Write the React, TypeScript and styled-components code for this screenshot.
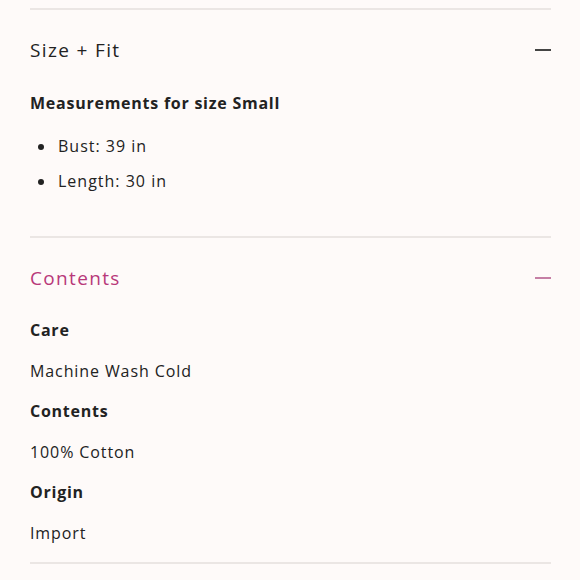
import React from "react";
import styled, { createGlobalStyle } from "styled-components";

const Global = createGlobalStyle`
  html, body { margin: 0; padding: 0; background: #fefaf9; }
  body { font-family: "Open Sans", Lato, sans-serif; color: #222; }
`;

const Page = styled.div`
  padding: 8px 29px 0 30px;
`;

const Section = styled.section<{ $pad: number }>`
  border-top: 2px solid #ebe6e4;
  padding-bottom: ${(p) => p.$pad}px;
`;

const Header = styled.div`
  display: flex;
  align-items: center;
  justify-content: space-between;
  padding: 28px 0;
`;

const Title = styled.h2<{ $active?: boolean }>`
  margin: 0;
  font-size: 19px;
  line-height: 24px;
  font-weight: 400;
  letter-spacing: 1.35px;
  color: ${(p) => (p.$active ? "#b8387a" : "#222")};
`;

const Minus = styled.span<{ $active?: boolean }>`
  display: block;
  width: 16px;
  height: 2px;
  background: ${(p) => (p.$active ? "#c57fa5" : "#444")};
`;

const SubTitle = styled.h3`
  margin: 0;
  font-size: 16px;
  line-height: 26px;
  font-weight: 700;
  letter-spacing: 0.75px;
`;

const List = styled.ul`
  list-style: none;
  margin: 13px 0 0;
  padding: 0;
`;

const Item = styled.li`
  display: flex;
  align-items: center;
  gap: 14px;
  font-size: 16px;
  line-height: 35px;
  letter-spacing: 1px;
`;

const Dot = styled.span`
  width: 6px;
  height: 6px;
  border-radius: 50%;
  background: #222;
  margin-left: 8px;
  flex: none;
`;

const Details = styled.dl`
  margin: 0;
  display: flex;
  flex-direction: column;
  gap: 16.5px;
`;

const Term = styled.dt`
  font-size: 16px;
  line-height: 24px;
  font-weight: 700;
  letter-spacing: 0.75px;
`;

const Value = styled.dd`
  margin: 0;
  font-size: 16px;
  line-height: 24px;
  letter-spacing: 0.9px;
`;

const Bottom = styled.div`
  border-top: 2px solid #ebe6e4;
`;

export default function App() {
  return (
    <>
      <Global />
      <Page>
        <Section $pad={37}>
          <Header>
            <Title>Size + Fit</Title>
            <Minus />
          </Header>
          <SubTitle>Measurements for size Small</SubTitle>
          <List>
            <Item>
              <Dot />
              Bust: 39 in
            </Item>
            <Item>
              <Dot />
              Length: 30 in
            </Item>
          </List>
        </Section>
        <Section $pad={17.5}>
          <Header>
            <Title $active>Contents</Title>
            <Minus $active />
          </Header>
          <Details>
            <Term>Care</Term>
            <Value>Machine Wash Cold</Value>
            <Term>Contents</Term>
            <Value>100% Cotton</Value>
            <Term>Origin</Term>
            <Value>Import</Value>
          </Details>
        </Section>
        <Bottom />
      </Page>
    </>
  );
}
